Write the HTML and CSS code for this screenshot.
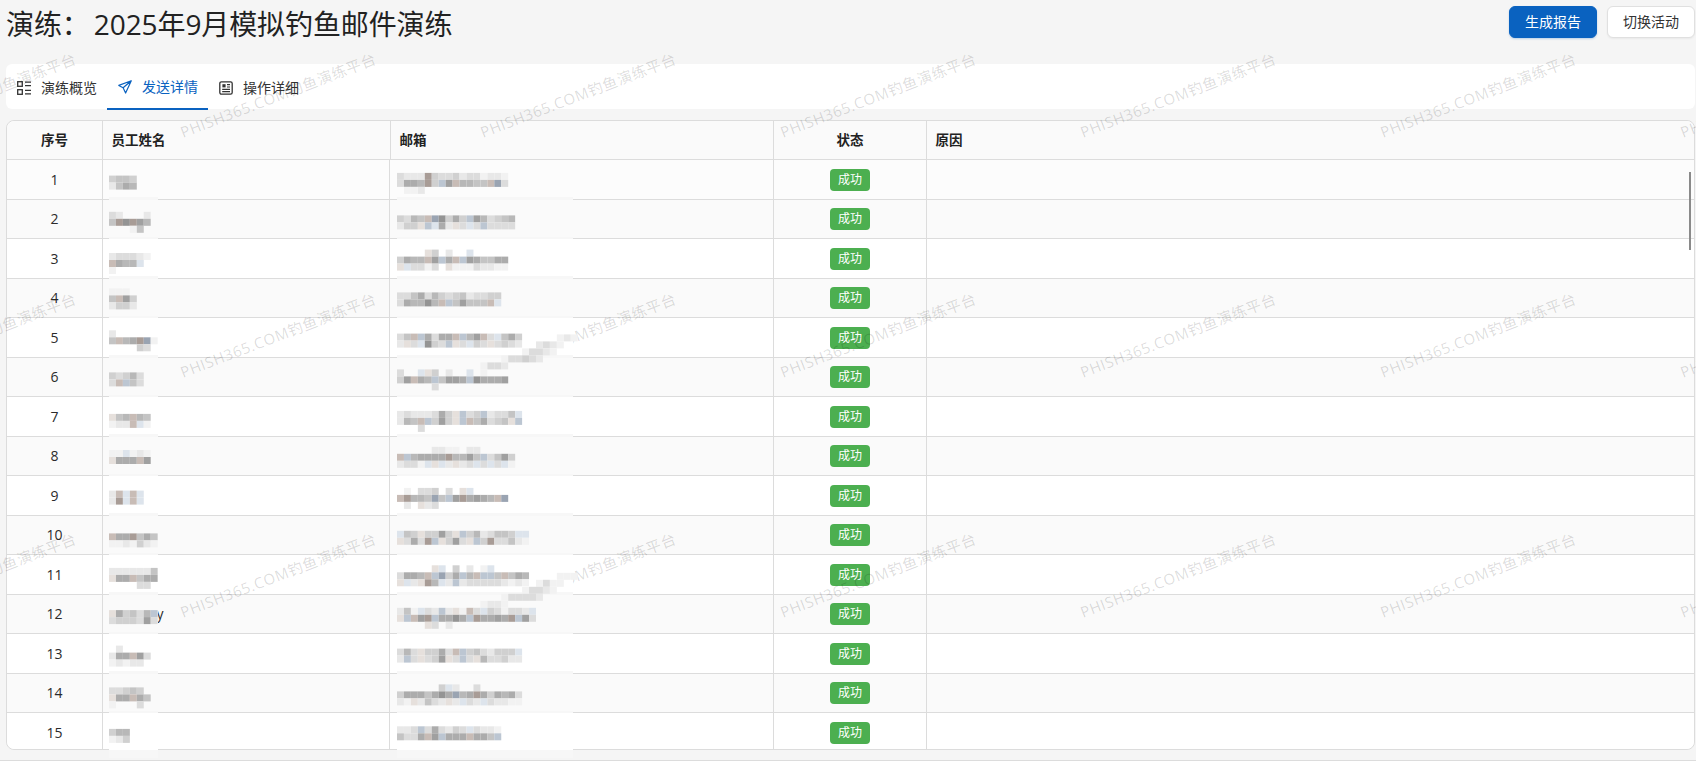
FILE: index.html
```html
<!DOCTYPE html>
<html lang="zh-CN">
<head>
<meta charset="utf-8">
<title>演练：2025年9月模拟钓鱼邮件演练</title>
<link rel="stylesheet" href="styles.css">
<script src="script.js" defer></script>
</head>
<body>
<header class="page-header">
  <h1 class="page-title">演练： 2025年9月模拟钓鱼邮件演练</h1>
  <div class="actions">
    <button class="btn btn-primary">生成报告</button>
    <button class="btn btn-default">切换活动</button>
  </div>
</header>

<nav class="tabs">
  <a class="tab">
    <svg class="tab-icon" viewBox="0 0 14 14" fill="none" stroke="currentColor" stroke-width="1.3"><rect x=".7" y=".7" width="4.6" height="4.6"/><rect x=".7" y="8.7" width="4.6" height="4.6"/><path d="M8 1.2h6M8 4.6h6M8 9.4h6M8 12.8h6"/></svg>
    <span>演练概览</span>
  </a>
  <a class="tab tab-active">
    <svg class="tab-icon" viewBox="0 0 14 14" fill="none" stroke="currentColor" stroke-width="1.2" stroke-linejoin="round"><path d="M13.3.8.8 5.4l4.3 2.4 2.5 5.2zM5.1 7.8 13.3.8"/></svg>
    <span>发送详情</span>
  </a>
  <a class="tab">
    <svg class="tab-icon" viewBox="0 0 14 14" fill="none" stroke="currentColor" stroke-width="1.3"><rect x=".8" y=".8" width="12.4" height="12.4" rx="1.6"/><path d="M3.4 3.2h3.2v3.2H3.4z" fill="currentColor" stroke="none"/><path d="M8 3.6h3M8 6h3M3.2 8.4h7.8M3.2 10.6h7.8" stroke-width="1.1"/></svg>
    <span>操作详细</span>
  </a>
</nav>

<section class="table">
  <div class="row-head">
    <div class="cell center">序号</div>
    <div class="cell">员工姓名</div>
    <div class="cell">邮箱</div>
    <div class="cell center">状态</div>
    <div class="cell last">原因</div>
  </div>
  <div class="row row-first">
    <div class="cell center">1</div>
    <div class="cell"><div class="mosaic name" data-y="15.6" data-cells="4554|2576"></div></div>
    <div class="cell"><div class="mosaic mail" data-y="12.9" data-cells="3222W43342331221|3776W4k8w6655wK3|.112"></div></div>
    <div class="cell center"><span class="badge">成功</span></div>
    <div class="cell last"></div>
  </div>
  <div class="row row-even">
    <div class="cell center">2</div>
    <div class="cell"><div class="mosaic name" data-y="11.8" data-cells="32...2|5W9W86|...15."></div></div>
    <div class="cell"><div class="mosaic mail" data-y="15.4" data-cells="4365wK9474k863456|244akc72a3c3k3333"></div></div>
    <div class="cell center"><span class="badge">成功</span></div>
    <div class="cell last"></div>
  </div>
  <div class="row">
    <div class="cell center">3</div>
    <div class="cell"><div class="mosaic name" data-y="14" data-cells="233321|w766c|1"></div></div>
    <div class="cell"><div class="mosaic mail" data-y="10.6" data-cells="....a4.2..c.....|4766w8k7wk875577|ac3313.a11132211"></div></div>
    <div class="cell center"><span class="badge">成功</span></div>
    <div class="cell last"></div>
  </div>
  <div class="row row-even">
    <div class="cell center">4</div>
    <div class="cell"><div class="mosaic name" data-y="9.4" data-cells="111|5w84|2442"></div></div>
    <div class="cell"><div class="mosaic mail" data-y="13.4" data-cells="335736434523344|376696wk58555wc"></div></div>
    <div class="cell center"><span class="badge">成功</span></div>
    <div class="cell last"></div>
  </div>
  <div class="row">
    <div class="cell center">5</div>
    <div class="cell"><div class="mosaic name" data-y="12.3" data-cells="2|5w67WK1|....43"></div></div>
    <div class="cell"><div class="mosaic mail" data-y="15.6" data-cells="35wk7377wk68w3c574|2a3c943ka3c43a3432"></div></div>
    <div class="cell center"><span class="badge">成功</span></div>
    <div class="cell last"></div>
  </div>
  <div class="row row-even">
    <div class="cell center">6</div>
    <div class="cell"><div class="mosaic name" data-y="14.4" data-cells="43463|3wk53"></div></div>
    <div class="cell"><div class="mosaic mail" data-y="-23.6" data-cells=".......................121|....................2321|..................13321|...............133432|............1332|3..ca4.2..c.1|48w76k5887k97778|.....3"></div></div>
    <div class="cell center"><span class="badge">成功</span></div>
    <div class="cell last"></div>
  </div>
  <div class="row">
    <div class="cell center">7</div>
    <div class="cell"><div class="mosaic name" data-y="16.9" data-cells="a56w65|122wc1"></div></div>
    <div class="cell"><div class="mosaic mail" data-y="13.9" data-cells="23222374ak34k2335c|265wk484akw57345ak|...3"></div></div>
    <div class="cell center"><span class="badge">成功</span></div>
    <div class="cell last"></div>
  </div>
  <div class="row row-even">
    <div class="cell center">8</div>
    <div class="cell"><div class="mosaic name" data-y="13" data-cells="11c121|a777w8"></div></div>
    <div class="cell"><div class="mosaic mail" data-y="9.8" data-cells=".....2211.22|wk67777W6685k3584|2331cac2a23c3c3c1"></div></div>
    <div class="cell center"><span class="badge">成功</span></div>
    <div class="cell last"></div>
  </div>
  <div class="row">
    <div class="cell center">9</div>
    <div class="cell"><div class="mosaic name" data-y="14.6" data-cells="2wcwc|2Wcwc"></div></div>
    <div class="cell"><div class="mosaic mail" data-y="11.9" data-cells=".1.334.3.ac|wW665K5k8W7876wK|.2.a23"></div></div>
    <div class="cell center"><span class="badge">成功</span></div>
    <div class="cell last"></div>
  </div>
  <div class="row row-even">
    <div class="cell center">10</div>
    <div class="cell"><div class="mosaic name" data-y="17.4" data-cells="w77W575|1121421"></div></div>
    <div class="cell"><div class="mosaic mail" data-y="14.8" data-cells="c54a4484ak4623554cc|a373Wka483ak4W33521"></div></div>
    <div class="cell center"><span class="badge">成功</span></div>
    <div class="cell last"></div>
  </div>
  <div class="row">
    <div class="cell center">11</div>
    <div class="cell"><div class="mosaic name" data-y="12.9" data-cells="2222225|a77w577|....33"></div></div>
    <div class="cell"><div class="mosaic mail" data-y="10.3" data-cells=".....ac.4.2.1c|3776wkK47k6wkk5w576|ac2aW6c2k2333332121"></div></div>
    <div class="cell center"><span class="badge">成功</span></div>
    <div class="cell last"></div>
  </div>
  <div class="row row-even">
    <div class="cell center">12</div>
    <div class="cell"><span class="name-tail">y</span><div class="mosaic name" data-y="15.1" data-cells="a74536k|3444383"></div></div>
    <div class="cell"><div class="mosaic mail" data-y="-22.2" data-cells=".......................111|....................1311|..................13321|...............133332|............1221|251c32k2a1w3c431332c|akw8Wk7797kW7787Wk83|....a3.2"></div></div>
    <div class="cell center"><span class="badge">成功</span></div>
    <div class="cell last"></div>
  </div>
  <div class="row">
    <div class="cell center">13</div>
    <div class="cell"><div class="mosaic name" data-y="11.6" data-cells=".2|277w83|12122"></div></div>
    <div class="cell"><div class="mosaic mail" data-y="14.6" data-cells="363a4473wk4532444c|2k3a348a3k3a633422"></div></div>
    <div class="cell center"><span class="badge">成功</span></div>
    <div class="cell last"></div>
  </div>
  <div class="row row-even">
    <div class="cell center">14</div>
    <div class="cell"><div class="mosaic name" data-y="13.4" data-cells="33454|a77w75|1...3"></div></div>
    <div class="cell"><div class="mosaic mail" data-y="10.4" data-cells="......4c2..3|47775797K67W747673|21a2532a2c32c32211"></div></div>
    <div class="cell center"><span class="badge">成功</span></div>
    <div class="cell last"></div>
  </div>
  <div class="row row-last">
    <div class="cell center">15</div>
    <div class="cell"><div class="mosaic name" data-y="15.9" data-cells="466|124"></div></div>
    <div class="cell"><div class="mosaic mail" data-y="13.3" data-cells="223k373243c3221|5337w8k777w775k"></div></div>
    <div class="cell center"><span class="badge">成功</span></div>
    <div class="cell last"></div>
  </div>
  <div class="scroll-thumb"></div>
</section>

<div class="watermarks" aria-hidden="true">
  <span>PHISH365.COM钓鱼演练平台</span><span>PHISH365.COM钓鱼演练平台</span><span>PHISH365.COM钓鱼演练平台</span><span>PHISH365.COM钓鱼演练平台</span><span>PHISH365.COM钓鱼演练平台</span><span>PHISH365.COM钓鱼演练平台</span><span>PHISH365.COM钓鱼演练平台</span>
  <span>PHISH365.COM钓鱼演练平台</span><span>PHISH365.COM钓鱼演练平台</span><span>PHISH365.COM钓鱼演练平台</span><span>PHISH365.COM钓鱼演练平台</span><span>PHISH365.COM钓鱼演练平台</span><span>PHISH365.COM钓鱼演练平台</span><span>PHISH365.COM钓鱼演练平台</span>
  <span>PHISH365.COM钓鱼演练平台</span><span>PHISH365.COM钓鱼演练平台</span><span>PHISH365.COM钓鱼演练平台</span><span>PHISH365.COM钓鱼演练平台</span><span>PHISH365.COM钓鱼演练平台</span><span>PHISH365.COM钓鱼演练平台</span><span>PHISH365.COM钓鱼演练平台</span>
</div>
</body>
</html>
```
FILE: styles.css
```css
* { box-sizing: border-box; }

html, body { height: 761px; }

body {
  position: relative;
  margin: 0;
  padding: 6px 1px 0 6px;
  overflow: hidden;
  display: flex;
  flex-direction: column;
  background: #f5f5f5;
  border-bottom: 1px solid #dcdcdc;
  color: #2b2b2b;
  font: 14px/1.4 "Open Sans", "Noto Sans CJK SC", sans-serif;
}

.page-header {
  display: flex;
  justify-content: space-between;
  align-items: flex-start;
  height: 58px;
}

.page-title {
  margin: 0;
  font-size: 28px;
  font-weight: 400;
  line-height: 37px;
  letter-spacing: -.1px;
  word-spacing: -3px;
  color: #222;
}

.actions { display: flex; gap: 10px; }

.btn {
  height: 32px;
  padding: 0;
  border-radius: 6px;
  font: inherit;
  line-height: 1;
}

.btn-primary {
  width: 88px;
  border: 1px solid #0a62c0;
  background: #0a62c0;
  color: #fff;
  box-shadow: 0 1px 2px rgba(10, 98, 192, .25);
}

.btn-default {
  width: 88px;
  border: 1px solid #e0e0e0;
  background: #fff;
  color: #333;
  box-shadow: 0 1px 2px rgba(0, 0, 0, .05);
}

.tabs {
  display: flex;
  height: 45px;
  margin-bottom: 11px;
  border-radius: 6px;
  background: #fff;
}

.tab {
  display: flex;
  align-items: center;
  gap: 10px;
  width: 101px;
  height: 46px;
  padding: 2px 10px 0 11px;
  color: #333;
}

.tab-active {
  color: #0a62c0;
  border-bottom: 2px solid #0a62c0;
}

.tab-icon { width: 14px; height: 14px; flex: none; }

.table {
  position: relative;
  display: flex;
  flex-direction: column;
  height: 630px;
  border: 1px solid #dcdcdc;
  border-radius: 8px;
  background: #fff;
}

.row-head,
.row {
  display: grid;
  flex: none;
  border-bottom: 1px solid #dcdcdc;
}

.row-head {
  grid-template-columns: 96px 288px 383px 153px 1fr;
  height: 39.4px;
  background: #fafafa;
  border-radius: 8px 8px 0 0;
  font-weight: 700;
  font-size: 13.5px;
  color: #222;
}

.row {
  --row-bg: #fff;
  grid-template-columns: 96px 287px 384px 153px 1fr;
  height: 39.5px;
  background: var(--row-bg);
}

.row-first { --row-bg: #fcfcfc; }
.row-even { --row-bg: #fafafa; }

.row-last {
  flex: 1;
  height: auto;
  border-bottom: 0;
  border-radius: 0 0 8px 8px;
}

.cell {
  position: relative;
  display: flex;
  align-items: center;
  padding: 0 8.5px;
  border-right: 1px solid #dcdcdc;
}

.cell.center { justify-content: center; }
.cell.last { border-right: 0; }
.row-last .cell { padding-top: 4px; }

.badge {
  display: flex;
  align-items: center;
  justify-content: center;
  width: 40px;
  height: 22px;
  border-radius: 4px;
  background: #4caf50;
  color: #fff;
  font-size: 12px;
  line-height: 1;
}

.name-tail { padding-left: 45px; }

.mosaic {
  position: absolute;
  z-index: 20;
  top: 0;
  height: 45px;
  background: linear-gradient(var(--row-bg) 37px, #f7f7f7 37px);
}

.mosaic.name { left: 5.7px; width: 49.6px; }
.mosaic.mail { left: 6.7px; width: 176.6px; }

.mosaic svg {
  position: absolute;
  left: 0;
  top: 0;
  width: 1px;
  height: 1px;
  overflow: visible;
  filter: blur(.7px);
}

.scroll-thumb {
  position: absolute;
  top: 51px;
  right: 3px;
  width: 2px;
  height: 78px;
  background: #8a8a8a;
}

.watermarks {
  position: absolute;
  z-index: 10;
  left: -172px;
  top: -25px;
  display: grid;
  grid-template-columns: repeat(7, 300px);
  grid-auto-rows: 240px;
  pointer-events: none;
}

.watermarks span {
  justify-self: center;
  align-self: center;
  white-space: nowrap;
  transform: rotate(-21deg);
  font-size: 15px;
  letter-spacing: .6px;
  color: rgba(0, 0, 0, .14);
}
```
FILE: script.js
```js
// Paints the pixelated blocks that cover names and mail addresses.
var SHADES = {
  '1': '#f2f2f2', '2': '#e8e8e8', '3': '#dcdcdc', '4': '#d0d0d0', '5': '#c4c4c4',
  '6': '#b8b8b8', '7': '#acacac', '8': '#a0a0a0', '9': '#949494',
  a: '#e6e0dc', w: '#c8bcb6', W: '#a89c96',
  c: '#dde4ec', k: '#bcc6d2', K: '#9aa4b2'
};
var NS = 'http://www.w3.org/2000/svg';
var CELL_W = 6.95;
var CELL_H = 7;

document.querySelectorAll('.mosaic').forEach(function (block) {
  var top = parseFloat(block.dataset.y);
  var svg = document.createElementNS(NS, 'svg');
  block.dataset.cells.split('|').forEach(function (line, r) {
    line.split('').forEach(function (ch, c) {
      if (!SHADES[ch]) return;
      var rect = document.createElementNS(NS, 'rect');
      rect.setAttribute('x', c * CELL_W);
      rect.setAttribute('y', top + r * CELL_H);
      rect.setAttribute('width', CELL_W);
      rect.setAttribute('height', CELL_H);
      rect.setAttribute('fill', SHADES[ch]);
      svg.appendChild(rect);
    });
  });
  block.appendChild(svg);
});
```
